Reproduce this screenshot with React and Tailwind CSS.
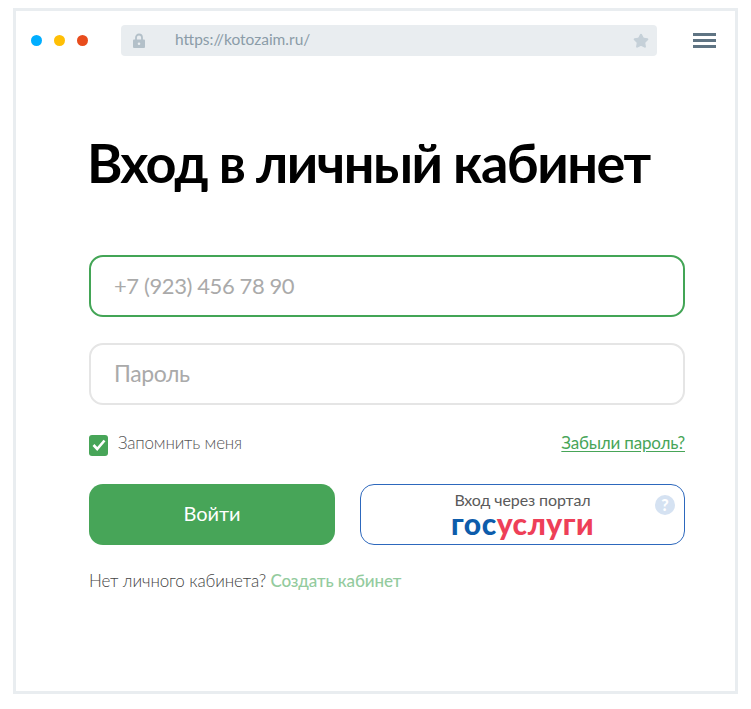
import { Star } from "lucide-react";

export default function App() {
  return (
    <div className="w-[751px] h-[709px] bg-white pt-2 pl-[13px] font-['Lato','Open_Sans',sans-serif]">
      <div className="w-[725px] h-[686px] border-[3px] border-[#e9edf0] bg-white">
        {/* browser bar */}
        <div className="flex items-center h-[31px] mt-[14px] pl-[15px] pr-[19px]">
          <div className="flex gap-3">
            <span className="w-[11px] h-[11px] rounded-full bg-[#00aeff]" />
            <span className="w-[11px] h-[11px] rounded-full bg-[#ffbf05]" />
            <span className="w-[11px] h-[11px] rounded-full bg-[#e84c1c]" />
          </div>
          <div className="ml-[33px] w-[536px] h-[31px] rounded bg-[#e9edf0] flex items-center pl-[12px] pr-2">
            <svg width="12" height="15" viewBox="0 0 12 15" fill="none">
              <path d="M3 7V4.500a3 3 0 0 1 6 0V7" stroke="#b3c0c9" strokeWidth="1.800" />
              <path fillRule="evenodd" d="M1 6.500h10a1 1 0 0 1 1 1V14a1 1 0 0 1-1 1H1a1 1 0 0 1-1-1V7.500a1 1 0 0 1 1-1zM6 9.500a1.300 1.300 0 1 0 0 2.600 1.300 1.300 0 0 0 0-2.600z" fill="#b3c0c9" />
            </svg>
            <span className="ml-[30px] mb-[1px] text-[15.5px] text-[#8b9ca8]">https://kotozaim.ru/</span>
            <Star size={16} className="ml-auto text-[#c5d0d8] fill-[#c5d0d8]" />
          </div>
          <div className="ml-auto w-[23px] flex flex-col gap-[3px]">
            <span className="h-[3px] bg-[#5f7483]" />
            <span className="h-[3px] bg-[#5f7483]" />
            <span className="h-[3px] bg-[#5f7483]" />
          </div>
        </div>

        {/* form */}
        <div className="pl-[73px] w-[669px]">
          <h1 className="mt-[72px] -ml-[2px] text-[54px] leading-[70px] font-bold tracking-[-1.5px] text-black whitespace-nowrap">
            Вход в личный кабинет
          </h1>
          <div className="mt-[57px] h-[62px] rounded-[14px] border-2 border-[#43a556] flex items-center pl-[23px] pb-[2px] text-[22px] tracking-[-0.4px] text-[#aaaaaa]">
            +7 (923) 456 78 90
          </div>
          <div className="mt-[26px] h-[62px] rounded-[14px] border-2 border-[#e5e5e5] flex items-center pl-[23px] pb-[2px] text-[23px] tracking-[-0.4px] text-[#aaaaaa]">
            Пароль
          </div>
          <div className="mt-[29px] h-[22px] flex items-center">
            <span className="w-[19px] h-[21px] rounded-[3px] bg-[#47a558] flex items-center justify-center">
              <svg width="14" height="12" viewBox="0 0 14 12" fill="none">
                <path d="M1.500 6 L5.200 10 L12.500 1.500" stroke="#fff" strokeWidth="2.600" />
              </svg>
            </span>
            <span className="ml-[10px] mb-[4px] text-[17px] tracking-[-0.2px] font-light text-[#555555]">Запомнить меня</span>
            <a className="ml-auto mb-[4px] text-[17px] tracking-[-0.2px] text-[#47a558] underline underline-offset-2">Забыли пароль?</a>
          </div>
          <div className="mt-[28px] flex justify-between">
            <button className="w-[246px] h-[61px] rounded-[14px] bg-[#47a558] pb-[4px] text-white text-[20px]">
              Войти
            </button>
            <div className="relative w-[325px] h-[61px] rounded-[14px] border border-[#2d68bd] flex flex-col items-center pt-[6px]">
              <span className="text-[16px] leading-[18px] tracking-[-0.1px] text-[#5a5a5a]">Вход через портал</span>
              <span className="text-[30px] leading-[28px] tracking-[0.5px] font-black">
                <span className="text-[#0d5cab]">гос</span>
                <span className="text-[#ee3f58]">услуги</span>
              </span>
              <span className="absolute right-[9px] top-[10px] w-5 h-5 rounded-full bg-[#d5e2f2] flex items-center justify-center text-[16px] font-black text-white">
                ?
              </span>
            </div>
          </div>
          <p className="mt-[25px] text-[17px] leading-[22px] tracking-[-0.1px] font-light text-[#444444]">
            Нет личного кабинета? <a className="text-[#93cb9e] font-medium">Создать кабинет</a>
          </p>
        </div>
      </div>
    </div>
  );
}
